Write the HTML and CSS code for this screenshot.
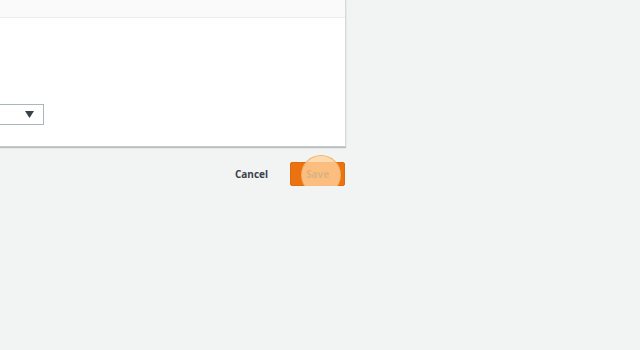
FILE: index.html
```html
<!DOCTYPE html>
<html>
<head>
<meta charset="utf-8">
<link rel="stylesheet" href="styles.css">
</head>
<body>
<div class="page">
  <div class="card">
    <div class="card-head"></div>
    <div class="card-body">
      <div class="select">
        <svg class="caret" width="9" height="7" viewBox="0 0 9 7"><path d="M0 0H9L4.5 7Z" fill="#3b4149"/></svg>
      </div>
    </div>
  </div>
  <div class="actions">
    <span class="cancel">Cancel</span>
    <span class="save">Save<span class="touch"></span></span>
  </div>
</div>
</body>
</html>
```
FILE: styles.css
```css
html, body {
  margin: 0;
  padding: 0;
  background: #f2f3f3;
  font-family: "Open Sans", "Liberation Sans", sans-serif;
}
.page {
  width: 346px;
}
.card {
  background: #ffffff;
  border-right: 1px solid #d5dbdb;
  border-bottom: 1px solid #c6cccc;
  box-shadow: 0 1px 1px rgba(0, 28, 36, 0.25);
  height: 147px;
  box-sizing: border-box;
}
.card-head {
  height: 17px;
  background: #fafafa;
  border-bottom: 1px solid #eaeded;
}
.card-body {
  padding-top: 86px;
}
.select {
  margin-left: -20px;
  width: 64px;
  height: 21px;
  box-sizing: border-box;
  border: 1px solid #aab7b8;
  border-left: none;
  background: #fff;
  display: flex;
  justify-content: flex-end;
  align-items: center;
  padding-right: 9px;
}
.actions {
  display: flex;
  justify-content: flex-end;
  align-items: center;
  margin-top: 15px;
  margin-right: 1px;
  gap: 22px;
}
.cancel {
  font-size: 10px;
  font-weight: 700;
  color: #3b4149;
}
.save {
  position: relative;
  width: 55px;
  height: 24px;
  box-sizing: border-box;
  background: #ec7211;
  border: 1px solid #dd6b10;
  border-radius: 2px;
  display: flex;
  justify-content: center;
  align-items: center;
  font-size: 10px;
  font-weight: 700;
  color: #5a3a1a;
}
.touch {
  position: absolute;
  left: 10px;
  top: -8px;
  width: 40px;
  height: 40px;
  box-sizing: border-box;
  border-radius: 50%;
  background: rgba(255, 212, 158, 0.78);
  border: 1px solid rgba(240, 170, 90, 0.8);
}
```
